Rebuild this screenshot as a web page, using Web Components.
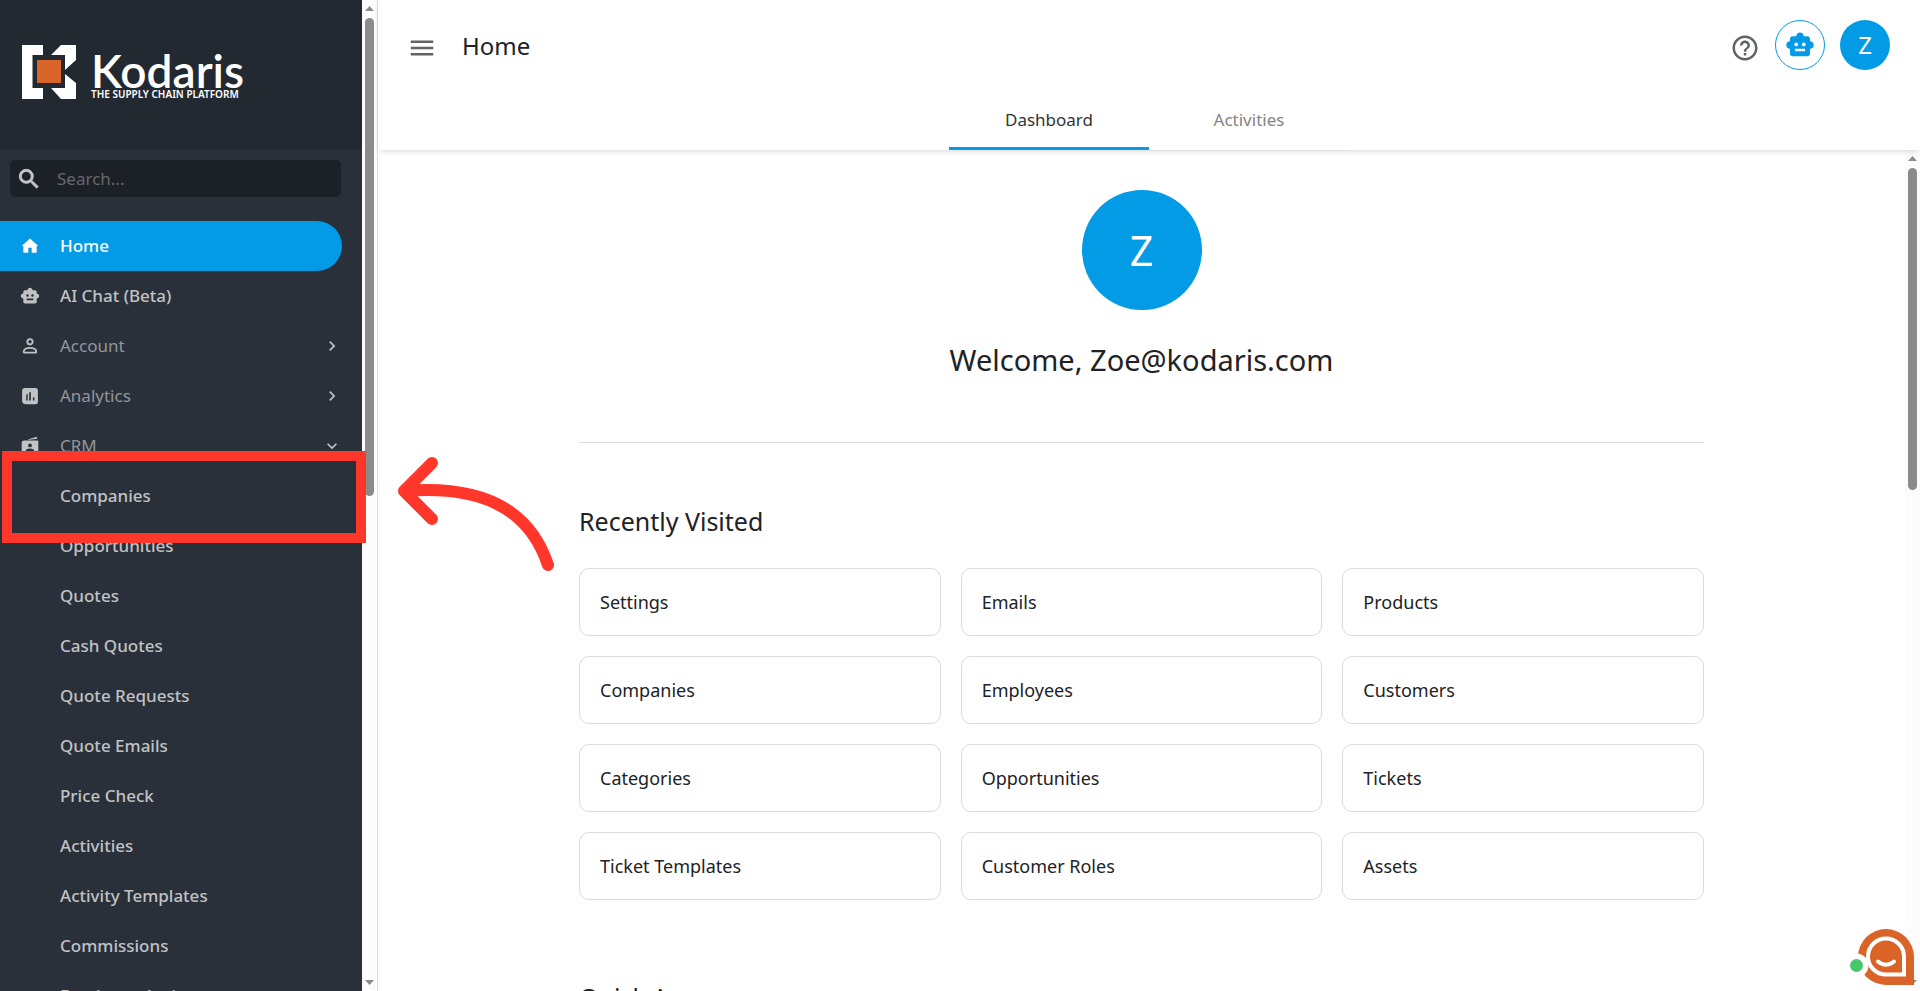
<!DOCTYPE html>
<html lang="en">
<head>
<meta charset="utf-8">
<title>Home</title>
<style>
  html, body {
    height: 100%;
    margin: 0;
  }

  body {
    overflow: hidden;
    font-family: "Noto Sans", "Open Sans", sans-serif;
    color: #212225;
    background: #fff;
  }
</style>
</head>
<body>
<k-app></k-app>

<script>
const icons = {
  search: '<path d="M15.5 14h-.79l-.28-.27A6.47 6.47 0 0 0 16 9.5 6.5 6.5 0 1 0 9.5 16c1.61 0 3.09-.59 4.23-1.57l.27.28v.79l5 4.99L20.49 19l-4.99-5zm-6 0C7.01 14 5 11.99 5 9.5S7.01 5 9.5 5 14 7.01 14 9.5 11.99 14 9.5 14z" stroke="currentColor" stroke-width=".8"/>',
  home: '<path d="M10 20v-6h4v6h6v-8h2L12 3 2 12h2v8z"/>',
  robot: '<path fill-rule="evenodd" d="M20 9V7c0-1.1-.9-2-2-2h-3c0-1.66-1.34-3-3-3S9 3.34 9 5H6c-1.1 0-2 .9-2 2v2c-1.66 0-3 1.34-3 3s1.34 3 3 3v4c0 1.1.9 2 2 2h12c1.1 0 2-.9 2-2v-4c1.66 0 3-1.34 3-3s-1.34-3-3-3zM7.5 11.5c0-.83.67-1.5 1.5-1.5s1.5.67 1.5 1.5S9.83 13 9 13s-1.5-.67-1.5-1.5zM16 17H8v-2h8v2zm-1-4c-.83 0-1.5-.67-1.5-1.5S14.17 10 15 10s1.5.67 1.5 1.5S15.83 13 15 13z"/>',
  person: '<g fill="none" stroke="currentColor" stroke-width="2.2"><circle cx="12" cy="7" r="3.2"/><path d="M5.5 20h13c.8 0 1-.5 1-1.2 0-3-3.700-4.600-7.500-4.600s-7.500 1.600-7.500 4.600c0 .7.2 1.200 1 1.200z"/></g>',
  analytics: '<path fill-rule="evenodd" d="M6 2.500h12.500A3 3 0 0 1 21.500 5.500V19a3 3 0 0 1-3 3H7a4.500 4.500 0 0 1-4.500-4.500V6A3.500 3.500 0 0 1 6 2.500zM7.500 10v7.500h1.800V10zM11 7.500v10h2v-10zM15.500 13.500v4h1.800v-4z"/>',
  crm: '<path d="M9 4.200 20.500 1v2.200L12 4.600z"/><path fill-rule="evenodd" d="M5 5.500h15.500A1.500 1.500 0 0 1 22 7v13a2 2 0 0 1-2 2H4a2 2 0 0 1-2-2V8.500a3 3 0 0 1 3-3zM12 9a2.300 2.300 0 1 0 0 4.600A2.300 2.300 0 0 0 12 9zM7 19h10v-1.500c0-1.700-3-2.600-5-2.600s-5 .9-5 2.600z"/>',
  right: '<path d="M10 6 8.590 7.410 13.170 12l-4.580 4.590L10 18l6-6z"/>',
  down: '<path d="M16.590 8.590 12 13.170 7.410 8.590 6 10l6 6 6-6z"/>',
  menu: '<path d="M3 18h18v-2H3v2zm0-5h18v-2H3v2zm0-7v2h18V6H3z"/>',
  help: '<path d="M11 18h2v-2h-2v2zm1-16C6.480 2 2 6.480 2 12s4.480 10 10 10 10-4.480 10-10S17.520 2 12 2zm0 18c-4.410 0-8-3.590-8-8s3.590-8 8-8 8 3.590 8 8-3.590 8-8 8zm0-14c-2.210 0-4 1.790-4 4h2c0-1.100.9-2 2-2s2 .9 2 2c0 2-3 1.750-3 5h2c0-2.250 3-2.500 3-5 0-2.210-1.790-4-4-4z"/>'
};

// Creates a base class that clones the given markup into an open shadow root.
function withTemplate(html) {
  const template = document.createElement('template');
  template.innerHTML = html;

  return class extends HTMLElement {
    constructor() {
      super();
      this.root = this.attachShadow({mode: 'open'});
      this.root.appendChild(template.content.cloneNode(true));
    }
  };
}

customElements.define('k-icon', class extends HTMLElement {
  static get observedAttributes() {
    return ['name'];
  }

  constructor() {
    super();
    this.root = this.attachShadow({mode: 'open'});
  }

  attributeChangedCallback() {
    this.root.innerHTML = `
      <style>
        :host { display: block; flex: none; width: var(--icon-size, 20px); height: var(--icon-size, 20px); }
        svg { display: block; width: 100%; height: 100%; fill: currentColor; }
      </style>
      <svg viewBox="0 0 24 24" aria-hidden="true">${icons[this.getAttribute('name')] || ''}</svg>
    `;
  }
});

customElements.define('k-scrollbar', class extends withTemplate(`
  <style>
    :host { display: flex; flex-direction: column; flex: none; width: 15px; background: #fcfcfc; }
    svg { display: block; width: 15px; height: 18px; fill: #8b8b8b; }
    .track { flex: 1; }
    .thumb { width: 9px; height: var(--thumb, 50%); margin: 0 auto; border-radius: 5px; background: #8b8b8b; }
  </style>
  <svg viewBox="0 0 15 18" aria-hidden="true"><path d="M3 11h9L7.500 6z"/></svg>
  <div class="track"><div class="thumb"></div></div>
  <svg viewBox="0 0 15 18" aria-hidden="true"><path d="M3 7h9l-4.500 5z"/></svg>
`) {});

customElements.define('k-logo', class extends withTemplate(`
  <style>
    :host { display: flex; align-items: flex-end; gap: 15px; color: #fff; font-weight: 600; }
    svg { display: block; width: 54px; height: 54px; }
    .name { font-family: Lato, sans-serif; font-size: 46px; line-height: 36px; }
    .tagline { font-size: 10px; line-height: 10px; }
  </style>
  <svg viewBox="0 0 54 54" aria-hidden="true">
    <path fill="#fff" d="M0 0h21v10H10.500v33H21v11H0zM29 10 39 0h15v15L43 25V10zM43 29l11 9v16H39L29 43h14z"/>
    <path fill="#da6328" d="M15 15h24v23H15z"/>
  </svg>
  <div>
    <div class="name">Kodaris</div>
    <div class="tagline">THE SUPPLY CHAIN PLATFORM</div>
  </div>
`) {});

customElements.define('k-search', class extends withTemplate(`
  <style>
    :host { display: block; }
    label { display: flex; align-items: center; gap: 15px; height: 37px; padding: 0 6px; border-radius: 5px; background: #1c2027; color: #c4c6c8; --icon-size: 26px; }
    input { flex: 1; min-width: 0; padding: 0; border: 0; outline: 0; background: none; color: inherit; font: inherit; font-size: 17px; }
    input::placeholder { color: #66696d; opacity: 1; }
  </style>
  <label><k-icon name="search"></k-icon><input type="search" placeholder="Search..." aria-label="Search"></label>
`) {});

customElements.define('k-nav-item', class extends HTMLElement {
  constructor() {
    super();
    this.root = this.attachShadow({mode: 'open'});
  }

  connectedCallback() {
    const group = this.hasAttribute('group');
    const open = this.hasAttribute('open');
    const tag = group ? 'button type="button" aria-expanded="' + open + '"' : 'a href="#"';

    this.root.innerHTML = `
      <style>
        :host { display: block; color: #c0c2c4; }
        a, button {
          box-sizing: border-box; display: flex; align-items: center; width: 100%; height: 50px;
          padding: 0 0 0 20px; border: 0; background: none; color: inherit;
          font: 550 17px/24px "Noto Sans", sans-serif; text-align: left; text-decoration: none;
        }
        .icon { flex: none; width: 40px; }
        .label { flex: 1; }
        button .label { color: #92969a; font-weight: 400; }
        :host([active]) a { border-radius: 0 25px 25px 0; background: #049be6; color: #fff; }
      </style>
      <${tag}>
        <span class="icon"><k-icon name="${this.getAttribute('icon') || ''}"></k-icon></span>
        <span class="label"><slot></slot></span>
        ${group ? `<k-icon name="${open ? 'down' : 'right'}"></k-icon>` : ''}
      </${group ? 'button' : 'a'}>
    `;
  }
});

customElements.define('k-sidebar', class extends withTemplate(`
  <style>
    :host { display: flex; flex-direction: column; width: 362px; overflow: hidden; background: #2a303a; }
    header { box-sizing: border-box; flex: none; height: 150px; padding: 45px 22px; background: #232931; }
    .search { padding: 10px 21px 24px 10px; }
    nav { flex: 1; min-height: 0; padding-right: 20px; overflow-y: auto; scrollbar-width: none; }
  </style>
  <header><k-logo></k-logo></header>
  <k-search class="search"></k-search>
  <nav><slot></slot></nav>
`) {});

customElements.define('k-avatar', class extends withTemplate(`
  <style>
    :host {
      display: flex; align-items: center; justify-content: center; flex: none; width: 50px; height: 50px;
      border-radius: 50%; background: #049be6; color: #fff; font-size: 24px; line-height: 1;
    }
    :host([large]) { width: 120px; height: 120px; font-size: 41px; }
  </style>
  <slot></slot>
`) {});

customElements.define('k-page-header', class extends withTemplate(`
  <style>
    :host { display: block; position: relative; z-index: 1; padding-top: 20px; background: #fff; box-shadow: 0 3px 6px -2px rgba(0, 0, 0, .16); }
    .bar { display: flex; height: 50px; padding: 0 30px 0 29px; }
    button { padding: 0; border: 0; background: none; color: #5f6368; font: inherit; }
    .plain { height: 50px; padding-top: 6px; --icon-size: 30px; }
    h1 { flex: 1; margin: 0 25px; font-size: 24px; font-weight: 400; line-height: 52px; }
    .actions { display: flex; gap: 15px; }
    .bot { display: flex; align-items: center; justify-content: center; width: 50px; height: 50px; border: 1px solid #049be6; border-radius: 50%; color: #049be6; --icon-size: 30px; }
    .tabs { display: flex; justify-content: center; margin-top: 20px; }
    .tabs button { width: 200px; height: 60px; padding-bottom: 2px; color: #858585; font-size: 17px; box-shadow: 0 1px #e2e2e2; }
    .tabs button[aria-selected=true] { color: #333; box-shadow: inset 0 -3px #049be6; }
  </style>
  <div class="bar">
    <button class="plain" type="button" aria-label="Menu"><k-icon name="menu"></k-icon></button>
    <h1><slot></slot></h1>
    <div class="actions">
      <button class="plain" type="button" aria-label="Help"><k-icon name="help"></k-icon></button>
      <button class="bot" type="button" aria-label="AI chat"><k-icon name="robot"></k-icon></button>
      <button type="button" aria-label="Profile"><k-avatar>Z</k-avatar></button>
    </div>
  </div>
  <div class="tabs" role="tablist">
    <button type="button" role="tab" aria-selected="true">Dashboard</button>
    <button type="button" role="tab" aria-selected="false">Activities</button>
  </div>
`) {});

customElements.define('k-card', class extends withTemplate(`
  <style>
    :host { display: block; }
    a {
      box-sizing: border-box; display: flex; align-items: center; height: 68px; padding: 0 20px;
      border: 1px solid #dadce0; border-radius: 10px; color: inherit; font-size: 18px; text-decoration: none;
    }
  </style>
  <a href="#"><slot></slot></a>
`) {});

customElements.define('k-section', class extends withTemplate(`
  <style>
    :host { display: block; margin-bottom: 82px; }
    h2 { margin: 0 0 32px; font-size: 25px; font-weight: 400; line-height: 30px; }
    .grid { display: grid; grid-template-columns: repeat(3, 1fr); gap: 20px; }
  </style>
  <h2><slot name="heading"></slot></h2>
  <div class="grid"><slot></slot></div>
`) {});

customElements.define('k-dashboard', class extends withTemplate(`
  <style>
    :host { display: flex; flex: 1; min-height: 0; }
    .scroll { flex: 1; overflow-y: auto; scrollbar-width: none; }
    .content { max-width: 1125px; margin: 0 auto; padding-top: 40px; }
    .welcome { display: flex; flex-direction: column; align-items: center; gap: 30px; }
    p { margin: 0; font-size: 29px; line-height: 40px; }
    hr { height: 1px; margin: 62px 0 63px; border: 0; background: #dadce0; }
    k-scrollbar { --thumb: 40%; }
  </style>
  <div class="scroll">
    <div class="content">
      <div class="welcome">
        <k-avatar large>Z</k-avatar>
        <p>Welcome, Zoe@kodaris.com</p>
      </div>
      <hr>
      <slot></slot>
    </div>
  </div>
  <k-scrollbar></k-scrollbar>
`) {});

customElements.define('k-chat-button', class extends withTemplate(`
  <style>
    :host { position: fixed; right: 6px; bottom: 5px; z-index: 2; }
    button { display: block; padding: 0; border: 0; background: none; }
    svg { display: block; width: 66px; height: 58px; }
  </style>
  <button type="button" aria-label="Open chat">
    <svg viewBox="0 0 66 58" fill="none" aria-hidden="true">
      <path fill="#da6328" d="M38 1a28 28 0 0 1 28 28v28H38a28 28 0 0 1 0-56z"/>
      <path stroke="#fff" stroke-width="4" d="M38 10.500a18 18 0 0 1 18 18v18H38a18 18 0 0 1 0-36z"/>
      <path stroke="#fff" stroke-width="4" stroke-linecap="round" d="M30 33.500q8 6.500 16 0"/>
      <circle cx="8.500" cy="37.500" r="12" fill="#fff"/>
      <circle cx="8.500" cy="37.500" r="6.500" fill="#46c96d"/>
    </svg>
  </button>
`) {});

// Tutorial markup laid over the page: a box round one menu item and an arrow to it.
customElements.define('k-callout', class extends withTemplate(`
  <style>
    :host { position: absolute; top: 451px; left: 2px; z-index: 3; pointer-events: none; }
    svg { display: block; width: 560px; height: 130px; }
  </style>
  <svg viewBox="0 0 560 130" fill="none" stroke="#ff372b" aria-hidden="true">
    <path stroke-width="10" d="M5 5h354v82H5z"/>
    <path stroke-width="12" stroke-linecap="round" stroke-linejoin="round" d="M430 12 402 40l28 28M402 40C475 34 526 54 546 114"/>
  </svg>
`) {});

customElements.define('k-app', class extends withTemplate(`
  <style>
    :host { display: flex; height: 100vh; }
    main { display: flex; flex: 1; flex-direction: column; min-width: 0; border-left: 1px solid #dcdcdc; }
  </style>
  <k-sidebar>
    <k-nav-item icon="home" active>Home</k-nav-item>
    <k-nav-item icon="robot">AI Chat (Beta)</k-nav-item>
    <k-nav-item icon="person" group>Account</k-nav-item>
    <k-nav-item icon="analytics" group>Analytics</k-nav-item>
    <k-nav-item icon="crm" group open>CRM</k-nav-item>
    <k-nav-item>Companies</k-nav-item>
    <k-nav-item>Opportunities</k-nav-item>
    <k-nav-item>Quotes</k-nav-item>
    <k-nav-item>Cash Quotes</k-nav-item>
    <k-nav-item>Quote Requests</k-nav-item>
    <k-nav-item>Quote Emails</k-nav-item>
    <k-nav-item>Price Check</k-nav-item>
    <k-nav-item>Activities</k-nav-item>
    <k-nav-item>Activity Templates</k-nav-item>
    <k-nav-item>Commissions</k-nav-item>
    <k-nav-item>Employee Assignments</k-nav-item>
  </k-sidebar>
  <k-scrollbar></k-scrollbar>
  <main>
    <k-page-header>Home</k-page-header>
    <k-dashboard>
      <k-section>
        <span slot="heading">Recently Visited</span>
        <k-card>Settings</k-card>
        <k-card>Emails</k-card>
        <k-card>Products</k-card>
        <k-card>Companies</k-card>
        <k-card>Employees</k-card>
        <k-card>Customers</k-card>
        <k-card>Categories</k-card>
        <k-card>Opportunities</k-card>
        <k-card>Tickets</k-card>
        <k-card>Ticket Templates</k-card>
        <k-card>Customer Roles</k-card>
        <k-card>Assets</k-card>
      </k-section>
      <k-section>
        <span slot="heading">Quick Access</span>
      </k-section>
    </k-dashboard>
  </main>
  <k-chat-button></k-chat-button>
  <k-callout></k-callout>
`) {});
</script>
</body>
</html>
